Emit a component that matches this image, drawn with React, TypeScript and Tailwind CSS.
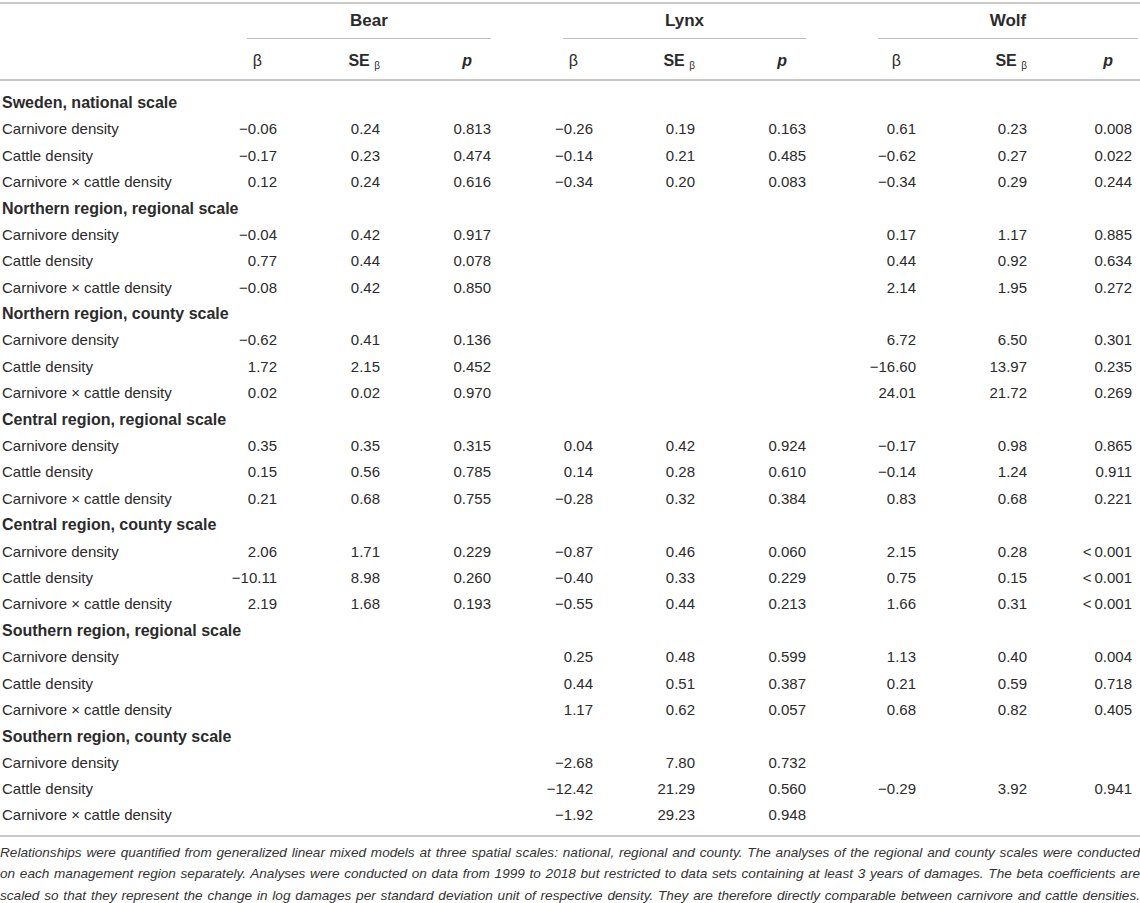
import * as React from "react";

type Cell = [string, string, string] | null;
type Row = { label: string; bear: Cell; lynx: Cell; wolf: Cell };
type Section = { title: string; rows: Row[] };

const LT = "<\u20090.001";

const SECTIONS: Section[] = [
  {
    title: "Sweden, national scale",
    rows: [
      { label: "Carnivore density", bear: ["−0.06", "0.24", "0.813"], lynx: ["−0.26", "0.19", "0.163"], wolf: ["0.61", "0.23", "0.008"] },
      { label: "Cattle density", bear: ["−0.17", "0.23", "0.474"], lynx: ["−0.14", "0.21", "0.485"], wolf: ["−0.62", "0.27", "0.022"] },
      { label: "Carnivore × cattle density", bear: ["0.12", "0.24", "0.616"], lynx: ["−0.34", "0.20", "0.083"], wolf: ["−0.34", "0.29", "0.244"] },
    ],
  },
  {
    title: "Northern region, regional scale",
    rows: [
      { label: "Carnivore density", bear: ["−0.04", "0.42", "0.917"], lynx: null, wolf: ["0.17", "1.17", "0.885"] },
      { label: "Cattle density", bear: ["0.77", "0.44", "0.078"], lynx: null, wolf: ["0.44", "0.92", "0.634"] },
      { label: "Carnivore × cattle density", bear: ["−0.08", "0.42", "0.850"], lynx: null, wolf: ["2.14", "1.95", "0.272"] },
    ],
  },
  {
    title: "Northern region, county scale",
    rows: [
      { label: "Carnivore density", bear: ["−0.62", "0.41", "0.136"], lynx: null, wolf: ["6.72", "6.50", "0.301"] },
      { label: "Cattle density", bear: ["1.72", "2.15", "0.452"], lynx: null, wolf: ["−16.60", "13.97", "0.235"] },
      { label: "Carnivore × cattle density", bear: ["0.02", "0.02", "0.970"], lynx: null, wolf: ["24.01", "21.72", "0.269"] },
    ],
  },
  {
    title: "Central region, regional scale",
    rows: [
      { label: "Carnivore density", bear: ["0.35", "0.35", "0.315"], lynx: ["0.04", "0.42", "0.924"], wolf: ["−0.17", "0.98", "0.865"] },
      { label: "Cattle density", bear: ["0.15", "0.56", "0.785"], lynx: ["0.14", "0.28", "0.610"], wolf: ["−0.14", "1.24", "0.911"] },
      { label: "Carnivore × cattle density", bear: ["0.21", "0.68", "0.755"], lynx: ["−0.28", "0.32", "0.384"], wolf: ["0.83", "0.68", "0.221"] },
    ],
  },
  {
    title: "Central region, county scale",
    rows: [
      { label: "Carnivore density", bear: ["2.06", "1.71", "0.229"], lynx: ["−0.87", "0.46", "0.060"], wolf: ["2.15", "0.28", LT] },
      { label: "Cattle density", bear: ["−10.11", "8.98", "0.260"], lynx: ["−0.40", "0.33", "0.229"], wolf: ["0.75", "0.15", LT] },
      { label: "Carnivore × cattle density", bear: ["2.19", "1.68", "0.193"], lynx: ["−0.55", "0.44", "0.213"], wolf: ["1.66", "0.31", LT] },
    ],
  },
  {
    title: "Southern region, regional scale",
    rows: [
      { label: "Carnivore density", bear: null, lynx: ["0.25", "0.48", "0.599"], wolf: ["1.13", "0.40", "0.004"] },
      { label: "Cattle density", bear: null, lynx: ["0.44", "0.51", "0.387"], wolf: ["0.21", "0.59", "0.718"] },
      { label: "Carnivore × cattle density", bear: null, lynx: ["1.17", "0.62", "0.057"], wolf: ["0.68", "0.82", "0.405"] },
    ],
  },
  {
    title: "Southern region, county scale",
    rows: [
      { label: "Carnivore density", bear: null, lynx: ["−2.68", "7.80", "0.732"], wolf: null },
      { label: "Cattle density", bear: null, lynx: ["−12.42", "21.29", "0.560"], wolf: ["−0.29", "3.92", "0.941"] },
      { label: "Carnivore × cattle density", bear: null, lynx: ["−1.92", "29.23", "0.948"], wolf: null },
    ],
  },
];

const NOTE = [
  "Relationships were quantified from generalized linear mixed models at three spatial scales: national, regional and county. The analyses of the regional and county scales were conducted",
  "on each management region separately. Analyses were conducted on data from 1999 to 2018 but restricted to data sets containing at least 3 years of damages. The beta coefficients are",
  "scaled so that they represent the change in log damages per standard deviation unit of respective density. They are therefore directly comparable between carnivore and cattle densities.",
];

// label + 3 x (β, SE, p); right edges line up with the reference
const GRID = "grid grid-cols-[200px_77px_103px_111px_102px_102px_111px_110px_111px_113px]";

function SubHead({ last }: { last?: boolean }) {
  return (
    <>
      <div className="pr-[15px] text-right font-normal">β</div>
      <div className="text-right">
        SE <sub className="text-[10px] font-normal">β</sub>
      </div>
      <div className={`text-right italic ${last ? "pr-[27px]" : "pr-[19px]"}`}>p</div>
    </>
  );
}

function Values({ cell, last }: { cell: Cell; last?: boolean }) {
  const v = cell || ["", "", ""];
  return (
    <>
      <div className="text-right">{v[0]}</div>
      <div className="text-right">{v[1]}</div>
      <div className={`text-right ${last ? "pr-[8px]" : ""}`}>{v[2]}</div>
    </>
  );
}

export default function App() {
  return (
    <div className="w-[1140px] bg-white pt-[2px] font-['Liberation_Sans',Arial,sans-serif] text-[#2b2b2b]">
      <div className="border-t-2 border-[#c9c9c9]">
        <div className={`${GRID} h-[35px] text-[17px] font-bold`}>
          <div />
          <div className="col-span-3 ml-[47px] flex items-center justify-center border-b border-[#bdbdbd]">
            Bear
          </div>
          <div className="col-span-3 ml-[72px] flex items-center justify-center border-b border-[#bdbdbd]">
            Lynx
          </div>
          <div className="col-span-3 ml-[72px] mr-[2px] flex items-center justify-center border-b border-[#bdbdbd]">
            Wolf
          </div>
        </div>

        <div className={`${GRID} h-[42px] items-center border-b-2 border-[#c9c9c9] pt-[4px] text-[16px] font-bold`}>
          <div />
          <SubHead />
          <SubHead />
          <SubHead last />
        </div>

        <div className="border-b-2 border-[#c9c9c9] pb-[6px] pt-[9px]">
          {SECTIONS.map((s) => (
            <React.Fragment key={s.title}>
              <div className="flex h-[26.4px] items-center pl-[2px] text-[16px] font-bold">{s.title}</div>
              {s.rows.map((r) => (
                <div key={s.title + r.label} className={`${GRID} h-[26.4px] items-center text-[15px]`}>
                  <div className="pl-[2px]">{r.label}</div>
                  <Values cell={r.bear} />
                  <Values cell={r.lynx} />
                  <Values cell={r.wolf} last />
                </div>
              ))}
            </React.Fragment>
          ))}
        </div>
      </div>

      <div className="pt-[5px] text-[13.6px] italic leading-[21.5px] text-[#333]">
        {NOTE.map((line) => (
          <p key={line} className="whitespace-nowrap text-justify [text-align-last:justify]">
            {line}
          </p>
        ))}
      </div>
    </div>
  );
}
